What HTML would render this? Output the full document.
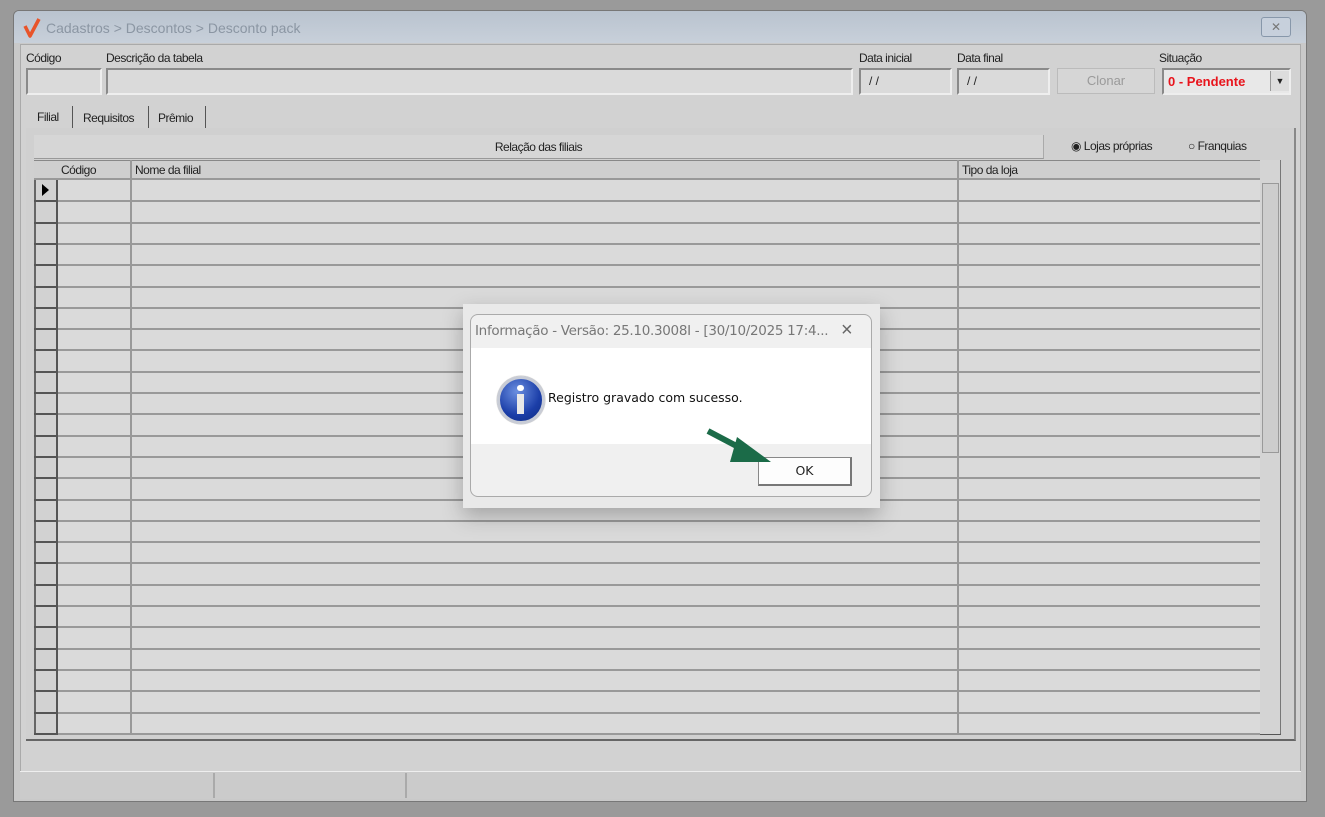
<!DOCTYPE html>
<html><head><meta charset="utf-8"><style>
*{margin:0;padding:0;box-sizing:border-box}
body{width:1325px;height:817px;background:#9a9a9a;font-family:"Liberation Sans",sans-serif;position:relative;overflow:hidden;font-size:12px;color:#222}
.a{position:absolute}
.win{left:13px;top:10px;width:1294px;height:792px;background:#c9c9c9;border:1px solid #777;border-radius:6px 6px 0 0}
.title{left:14px;top:11px;width:1292px;height:32px;background:linear-gradient(#b9c3cf,#c8d0da);border-radius:5px 5px 0 0}
.lbl{font-size:12px;color:#222;letter-spacing:-0.5px}
.inp{background:#dadada;border:2px solid #8a8a8a;border-right-color:#eee;border-bottom-color:#eee;height:27px}
.row{left:34px;width:1226px;height:2px;background:#999}
</style></head><body>
<div class="a win"></div>
<div class="a title"></div>
<svg class="a" style="left:22px;top:17px" width="20" height="22"><path d="M3 9 L8 19 L17 2" stroke="#e8542a" stroke-width="3.5" fill="none" stroke-linejoin="round"/></svg>
<div class="a" style="left:46px;top:20px;color:#8b96a3;font-size:14px">Cadastros &gt; Descontos &gt; Desconto pack</div>
<div class="a" style="left:1261px;top:17px;width:30px;height:20px;border:1px solid #8797aa;border-radius:3px;background:#c7d0dc;color:#777;font-size:12px;text-align:center;line-height:18px">✕</div>
<div class="a" style="left:20px;top:44px;width:1281px;height:728px;background:#d2d2d2;border:1px solid #aaa"></div>

<div class="a lbl" style="left:26px;top:51px">Código</div>
<div class="a lbl" style="left:106px;top:51px">Descrição da tabela</div>
<div class="a lbl" style="left:859px;top:51px">Data inicial</div>
<div class="a lbl" style="left:957px;top:51px">Data final</div>
<div class="a lbl" style="left:1159px;top:51px">Situação</div>
<div class="a inp" style="left:26px;top:68px;width:76px"></div>
<div class="a inp" style="left:106px;top:68px;width:747px"></div>
<div class="a inp" style="left:859px;top:68px;width:93px;padding-left:8px;line-height:22px">/ /</div>
<div class="a inp" style="left:957px;top:68px;width:93px;padding-left:8px;line-height:22px">/ /</div>
<div class="a" style="left:1057px;top:68px;width:98px;height:26px;background:#d6d6d6;border:1px solid #bbb;color:#9a9a9a;text-align:center;line-height:24px;font-size:13px">Clonar</div>
<div class="a inp" style="left:1162px;top:68px;width:129px;background:#e8e8e8;color:#e8141c;font-weight:bold;font-size:13px;padding-left:4px;line-height:24px">0 - Pendente</div>
<div class="a" style="left:1270px;top:71px;width:19px;height:20px;background:#ddd;border-left:1px solid #999;font-size:9px;text-align:center;line-height:20px">▼</div>

<div class="a lbl" style="left:37px;top:110px">Filial</div>
<div class="a" style="left:72px;top:106px;width:1px;height:22px;background:#555"></div>
<div class="a lbl" style="left:83px;top:111px">Requisitos</div>
<div class="a" style="left:148px;top:106px;width:1px;height:22px;background:#555"></div>
<div class="a lbl" style="left:158px;top:111px">Prêmio</div>
<div class="a" style="left:205px;top:106px;width:1px;height:22px;background:#555"></div>
<div class="a" style="left:26px;top:128px;width:1270px;height:613px;border-right:2px solid #888;border-bottom:2px solid #666;background:#d0d0d0"></div>
<div class="a" style="left:34px;top:135px;width:1010px;height:24px;background:#d6d6d6;border-bottom:1px solid #999;border-right:1px solid #aaa;text-align:center;line-height:24px;letter-spacing:-0.5px">Relação das filiais</div>
<div class="a lbl" style="left:1071px;top:139px">◉ Lojas próprias</div>
<div class="a lbl" style="left:1188px;top:139px">○ Franquias</div>

<div class="a" style="left:34px;top:160px;width:1247px;height:575px;background:#dadada;border:1px solid #777;border-bottom:2px solid #555"></div>
<div class="a" style="left:34px;top:160px;width:1226px;height:20px;background:#cfcfcf;border-bottom:2px solid #999;border-top:1px solid #888"></div>
<div class="a lbl" style="left:61px;top:163px">Código</div>
<div class="a lbl" style="left:135px;top:163px">Nome da filial</div>
<div class="a lbl" style="left:962px;top:163px">Tipo da loja</div>
<div class="a" style="left:34px;top:180px;width:24px;height:554px;background:#d2d2d2;border-right:2px solid #555;border-left:2px solid #666"></div>
<div class="a" style="left:130px;top:160px;width:2px;height:574px;background:#999"></div>
<div class="a" style="left:957px;top:160px;width:2px;height:574px;background:#999"></div>
<div class="a" style="left:42px;top:184px;width:0;height:0;border-left:7px solid #000;border-top:6px solid transparent;border-bottom:6px solid transparent"></div>
<div class="a" style="left:1260px;top:160px;width:20px;height:574px;background:#d4d4d4"></div>
<div class="a" style="left:1262px;top:183px;width:17px;height:270px;background:#cdcdcd;border:1px solid #999"></div>
<div id="rows"></div>
<script>
var h='';for(var i=1;i<=26;i++){var y=Math.round(180+i*21.3)-1;h+='<div class="a row" style="top:'+y+'px"></div><div class="a" style="left:34px;top:'+y+'px;width:24px;height:2px;background:#555"></div>';}
document.getElementById('rows').innerHTML=h;
</script>

<div class="a" style="left:20px;top:771px;width:1281px;height:28px;border-top:1px solid #eee;background:#cbcbcb"></div>
<div class="a" style="left:213px;top:773px;width:2px;height:25px;background:#aaa"></div>
<div class="a" style="left:405px;top:773px;width:2px;height:25px;background:#aaa"></div>

<div class="a" style="left:463px;top:304px;width:417px;height:204px;background:#e9e9e9;box-shadow:0 8px 20px rgba(0,0,0,.25)"></div>
<div class="a" style="left:470px;top:314px;width:402px;height:183px;border:1px solid #aaa;border-radius:8px;background:#f0f0f0;overflow:hidden">
 <div class="a" style="left:0;top:33px;width:402px;height:96px;background:#fff"></div>
 <div class="a" style="left:4px;top:8px;font-family:'DejaVu Sans',sans-serif;font-size:13.5px;color:#777;letter-spacing:-0.3px">Informação - Versão: 25.10.3008I - [30/10/2025 17:4...</div>
 <div class="a" style="left:370px;top:4px;font-size:20px;color:#666">×</div>
 <div class="a" style="left:26px;top:61px;width:48px;height:48px;border-radius:50%;background:radial-gradient(circle at 40% 30%,#6b8fe0,#1b3ea8 60%,#0d2a80);border:3px solid #c8ccd6;box-shadow:0 0 1px #555"></div>
 <div class="a" style="left:46px;top:70px;width:7px;height:6px;border-radius:3px;background:#fff"></div>
 <div class="a" style="left:46px;top:79px;width:7px;height:20px;background:#e8e8e8"></div>
 <div class="a" style="left:77px;top:75px;font-family:'DejaVu Sans',sans-serif;font-size:12.5px;color:#111">Registro gravado com sucesso.</div>
 <div class="a" style="left:287px;top:142px;width:94px;height:29px;background:#fdfdfd;border:1px solid #888;border-right:2px solid #777;border-bottom:2px solid #777;text-align:center;line-height:26px;font-family:'DejaVu Sans',sans-serif;font-size:12.5px">OK</div>
</div>
<svg class="a" style="left:700px;top:425px" width="80" height="45"><path d="M8 6 L46 26" stroke="#1b6b48" stroke-width="6"/><path d="M37 12 L71 37 L30 37 Z" fill="#1b6b48"/></svg>
</body></html>
